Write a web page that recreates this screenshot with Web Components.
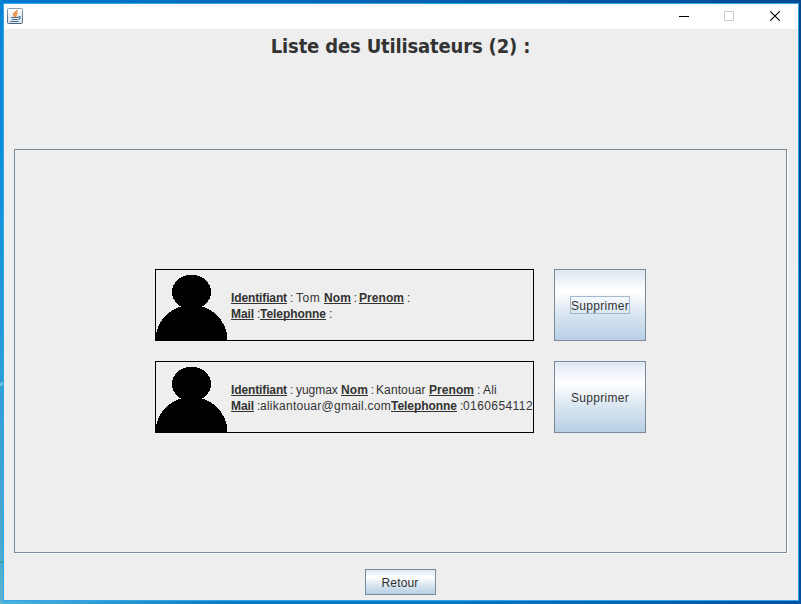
<!DOCTYPE html>
<html lang="fr"><head><meta charset="utf-8"><title>Liste des Utilisateurs</title>
<style>html,body{margin:0;height:100%;overflow:hidden}body{font:12px/16px "Liberation Sans",Arial,sans-serif;color:#333}</style></head>
<body>
<app-window>
  <page-title>Liste des Utilisateurs (2) :</page-title>
  <etched-panel>
    <user-row ident="Tom" widths="28,0" focused></user-row>
    <user-row ident="yugmax" nom="Kantouar" prenom="Ali" mail="alikantouar@gmail.com" tel="0160654112" widths="45,53"></user-row>
  </etched-panel>
  <metal-button slot="footer" text-width="37" style="width:71px;height:26px">Retour</metal-button>
</app-window>
<script>
const define=(name,html,setup)=>customElements.define(name,class extends HTMLElement{
  constructor(){super();this.attachShadow({mode:'open'});}
  connectedCallback(){this.shadowRoot.innerHTML=typeof html==='function'?html(this):html;if(setup)setup(this);}
});
/* Spreads the text over a whole number of pixels with letter spacing. */
define('fit-text',`<style>:host{display:inline-block;white-space:pre;height:16px;line-height:inherit}</style><slot></slot>`,h=>{
  const w=+h.getAttribute('w'),n=h.textContent.length;
  if(!w)return;
  const natural=h.getBoundingClientRect().width;
  h.style.letterSpacing=(w-natural)/n+'px';
  h.style.width=w+'px';
});
define('title-bar',`<style>
:host{display:flex;height:25px;background:#fff;align-items:flex-start;justify-content:space-between}
svg{display:block}.logo{margin:4px 0 0 3px}
</style>
<svg class="logo" width="16" height="16" viewBox="0 0 16 16">
<defs><linearGradient id="g" x2="0" y2="1"><stop stop-color="#fff"/><stop offset="1" stop-color="#d5dfe7"/></linearGradient><linearGradient id="b" x2="0" y2="1"><stop stop-color="#8fa0af"/><stop offset="1" stop-color="#456580"/></linearGradient></defs>
<rect x=".5" y=".5" width="15" height="15" rx="1" fill="url(#g)" stroke="url(#b)"/>
<path d="M10 2.2C10.3 4 6 5 6.5 6.8 6.7 7.6 7.8 8 7.5 8.9M10.7 4.9C8.7 5.6 8.3 6.6 9 7.3 9.3 7.8 9 8.3 8.5 8.7" fill="none" stroke="#ee7a1c" stroke-width="1.4"/>
<path d="M4 9.5H11.5M5 11.5H10.5M3.5 13.5H11.5M11.5 8.6C14.3 8 13.5 10.7 11.2 11.3" fill="none" stroke="#4d7193" stroke-width="1.2"/></svg>
<svg width="119" height="25" viewBox="679 4 119 25" fill="none" shape-rendering="crispEdges">
<path d="M679 16.5H689" stroke="#000"/><rect x="724.5" y="11.5" width="9" height="9" stroke="#ccc"/>
<path shape-rendering="auto" d="M770.3 11.3L779.7 20.7M779.7 11.3L770.3 20.7" stroke="#000" stroke-width="1.15"/></svg>`);
define('app-window',`<style>
:host{display:block;box-sizing:border-box;width:801px;height:604px;padding:3px 2px 3px 3px;
background:linear-gradient(155deg,transparent 35%,#6fc0e2 40% 62%,transparent 68%) 0 379px/3px 10px no-repeat,
linear-gradient(#3aa79a,#3aa79a) 0 561px/3px 2px no-repeat,
linear-gradient(#0b83d4 0,#0a8edb 25%,#2b9cd8 60%,#4aa9cf 90%,#5ab4cf) left/3px 100% no-repeat,
linear-gradient(90deg,#0379d0,#064a94) top/100% 3px no-repeat,linear-gradient(90deg,#48b5da,#0878c2 30%,#0879c4 55%,#0450a0) bottom/100% 3px no-repeat,linear-gradient(#064789,#044c9c)}
.frame{box-sizing:border-box;height:598px;border:1px solid #33a3ea;background:#eee;display:flex;flex-direction:column}
.client{flex:1;display:flex;flex-direction:column;align-items:center;min-height:0}
.foot{margin-top:16px;margin-right:2px}
</style><div class="frame"><title-bar></title-bar><div class="client"><slot></slot><div class="foot"><slot name="footer"></slot></div></div></div>`);
define('page-title',`<style>:host{display:block;box-sizing:border-box;height:120px;padding:4px 1px 0 0;font:bold 20px/26px "DejaVu Sans Condensed","DejaVu Sans",sans-serif;font-stretch:condensed;white-space:nowrap;letter-spacing:-.16px}</style><slot></slot>`);
define('etched-panel',`<style>:host{box-sizing:border-box;width:773px;height:404px;margin-right:1px;border:1px solid #7a8a99;box-shadow:1px 1px #fff;display:flex;flex-direction:column;justify-content:center;align-items:center;gap:20px}</style><slot></slot>`);
define('user-avatar',`<style>:host,svg{display:block;width:71px;height:70px}</style><svg viewBox="156 270 71 70" shape-rendering="crispEdges"><ellipse cx="191.5" cy="292" rx="19.5" ry="17.3"/><ellipse cx="191.5" cy="340" rx="36" ry="35"/></svg>`);
define('user-card',h=>{
const v=k=>h.getAttribute(k)||'';
const [a,b]=v('widths').split(',');
const t=(s,w)=>`<fit-text w="${w||''}">${s}</fit-text>`;
const k=(s,w)=>`<fit-text class="key" w="${w}">${s}</fit-text>`;
return `<style>
:host{box-sizing:border-box;width:379px;height:72px;border:1px solid #000;display:flex;align-items:center;gap:4px;overflow:hidden}
.text{padding-top:2px}.line{display:flex;height:16px}
.key{font-weight:bold;text-decoration:underline;text-underline-offset:1px;text-decoration-thickness:1px;text-decoration-skip-ink:none}
</style><user-avatar></user-avatar><div class="text"><div class="line">${
k('Identifiant',56)+t(' : ',9)+t(v('ident')+' ',a)+k('Nom',27)+t(' : ',8)+(v('nom')?t(v('nom')+' ',b):'')+k('Prenom',45)+t(' : ',9)+(v('prenom')?t(v('prenom'),14):'')
}</div><div class="line">${
k('Mail',23)+t(' :',6)+(v('mail')?t(v('mail'),131):'')+k('Telephonne',66)+t(' :',6)+(v('tel')?t(v('tel'),70):'')
}</div></div>`});
define('metal-button',h=>`<style>
:host{box-sizing:border-box;border:1px solid #7a8a99;display:flex;align-items:center;justify-content:center;background:linear-gradient(#dde8f3,#fff 30%,#fff 31%,#dce8f2 60%,#b8cfe5)}
span{box-sizing:border-box;display:flex;height:18px;line-height:18px;border:1px solid ${h.hasAttribute('focused')?'#a3b8cc':'transparent'};white-space:nowrap}
</style><span><fit-text w="${h.getAttribute('text-width')}">${h.textContent}</fit-text></span>`);
define('user-row',h=>`<style>:host{display:flex;gap:20px}metal-button{width:92px;height:72px}</style><user-card ${['ident','nom','prenom','mail','tel','widths'].map(k=>`${k}="${h.getAttribute(k)||''}"`).join(' ')}></user-card><metal-button text-width="58" ${h.hasAttribute('focused')?'focused':''}>Supprimer</metal-button>`);
</script></body></html>
